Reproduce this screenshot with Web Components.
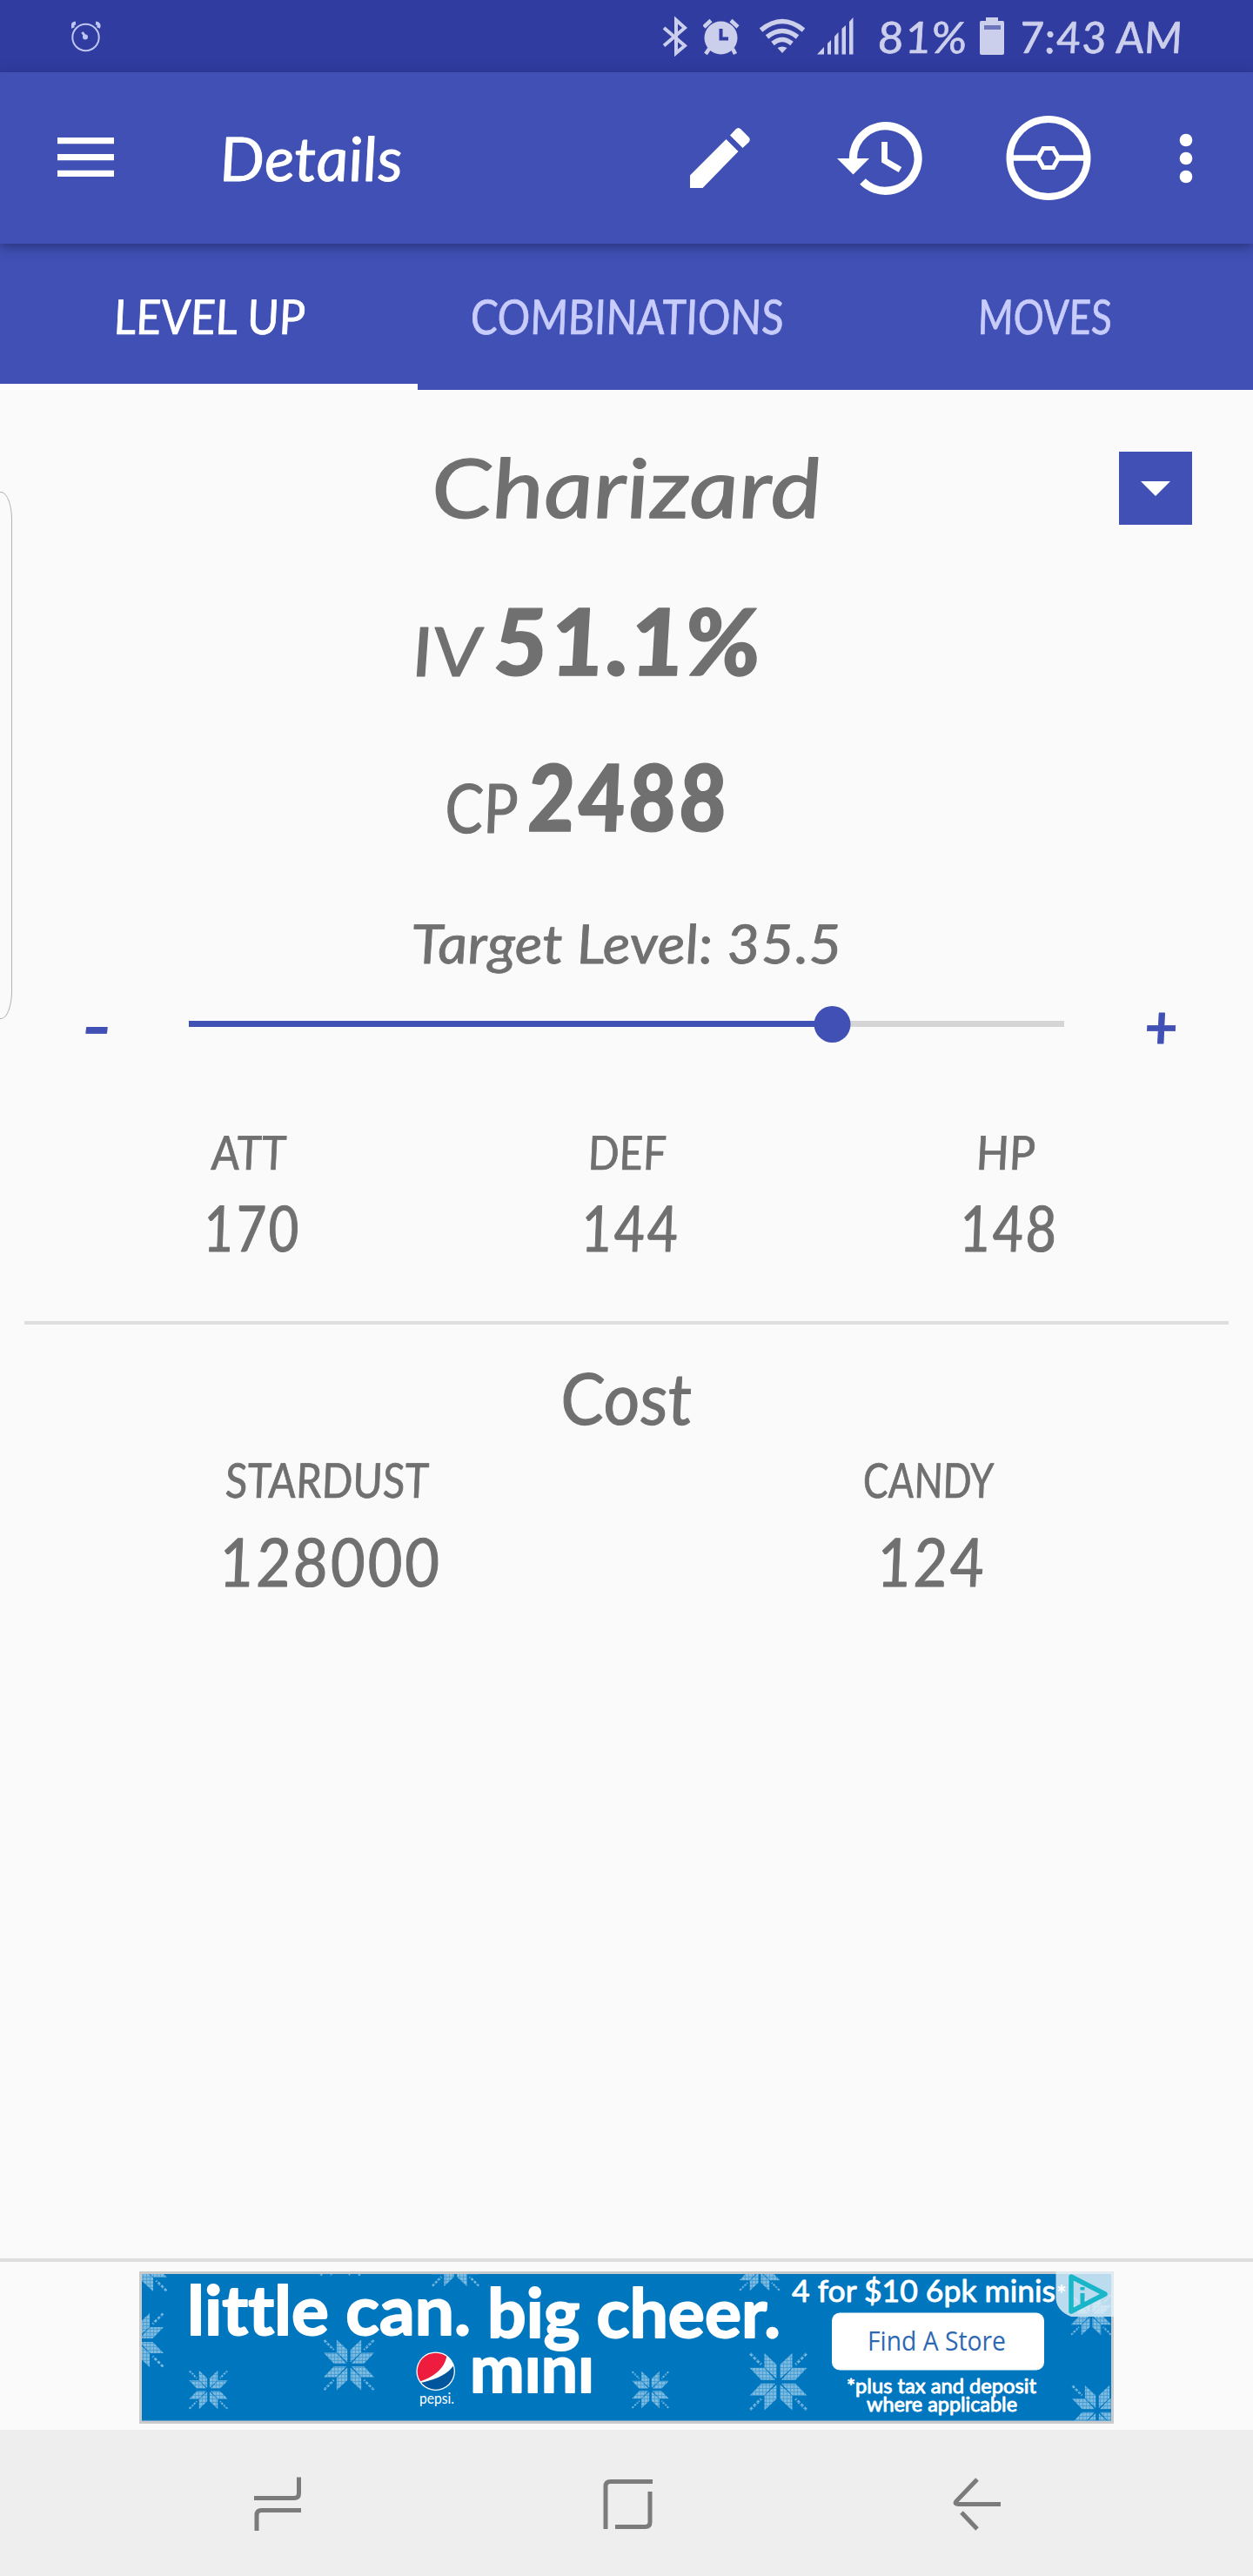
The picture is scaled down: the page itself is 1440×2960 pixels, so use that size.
<!DOCTYPE html>
<html lang="en">
<head>
<meta charset="utf-8">
<title>Details</title>
<style>
html,body{margin:0;padding:0;background:#fafafa}
body{width:1440px;height:2960px;overflow:hidden;font-family:Lato,"Open Sans",sans-serif}
</style>
</head>
<body>
<details-screen></details-screen>
<script>
const define = (name, html, setup) => customElements.define(name, class extends HTMLElement {
  constructor() {
    super();
    const root = this.attachShadow({ mode: 'open' });
    const t = document.createElement('template');
    t.innerHTML = html;
    root.append(t.content.cloneNode(true));
  }
  connectedCallback() { if (setup) setup.call(this, this.shadowRoot); }
});

/* One line of slanted lettering set to a given width (w), box height (h) and baseline (y). */
customElements.define('ink-text', class extends HTMLElement {
  connectedCallback() {
    const a = n => this.getAttribute(n);
    const root = this.shadowRoot || this.attachShadow({ mode: 'open' });
    root.innerHTML = `<style>
      :host{display:block;flex:none;width:${a('w')}px;height:${a('h')}px}
      svg{display:block;overflow:visible}
      text{font-family:Lato,"Open Sans",sans-serif;font-style:italic;font-weight:${a('weight') || 400};font-size:${a('size')}px;fill:currentColor;stroke:currentColor;stroke-width:${a('size') / 75}px;stroke-linejoin:round;font-variant-ligatures:none}
    </style><svg width="${a('w')}" height="${a('h')}"><text transform="translate(2 ${a('y')}) skewX(4)" x="0" y="0" textLength="${a('w')}" lengthAdjust="spacingAndGlyphs"></text></svg>`;
    root.querySelector('text').textContent = a('text');
  }
});

define('status-bar', `<style>
:host{display:flex;align-items:flex-start;height:83px;background:#303c9f;color:#cccfec}
svg{display:block;flex:none}
.note{margin-left:82px}.sp{flex:1}
.bt{margin-right:18px}.al{margin-right:23px}.wf{margin-right:14px}.sg{margin-right:26px}
.bat{margin:0 16px}
.time{margin-right:82px}
</style>
<svg class="note" width="34" height="83" viewBox="82 0 34 83" fill="none" stroke="#bfc6f5" stroke-width="2"><circle cx="98.500" cy="43" r="15.200"/><path d="M84 32Q82 27 87 26.500M113 32Q115 27 110 26.500" stroke-width="4"/><path d="M94.500 37L98 42" stroke-width="3"/><circle cx="98" cy="42.500" r="2" fill="#bfc6f5"/></svg>
<span class="sp"></span>
<svg class="bt" width="28" height="83" viewBox="762 0 28 83" fill="none" stroke="currentColor" stroke-width="4"><path d="M763 32L787 52.500 777 61V23L787 32 763 52.500"/></svg>
<svg class="al" width="42" height="83" viewBox="808 0 42 83"><circle cx="828.500" cy="43.500" r="19" fill="currentColor"/><path d="M809 31L817 23.500M848 31L840 23.500M815 56L811 62M842 56L845 62" stroke="currentColor" stroke-width="4.500"/><path d="M828.500 33V44.500H837" fill="none" stroke="#303c9f" stroke-width="4"/></svg>
<svg class="wf" width="52" height="83" viewBox="873 0 52 83" fill="none" stroke="currentColor" stroke-width="5.500"><path d="M874.500 34.500Q899 14.500 923.500 34.500M881.500 42.500Q899 28.500 916.500 42.500M888 50Q899 41 910 50"/><path d="M893.500 55Q899 52 904.500 55L899 61Z" fill="currentColor" stroke="none"/></svg>
<svg class="sg" width="42" height="83" viewBox="940 0 42 83" fill="currentColor"><path d="M940 62.500L948 54V62.500ZM952 50L956 46V62.500H952ZM960 42L964.500 37V62.500H960ZM968.500 33L973 29V62.500H968.500ZM977 25L981.500 20V62.500H977Z"/></svg>
<ink-text w="103" h="83" y="61" size="50" text="81%"></ink-text>
<svg class="bat" width="28" height="83" viewBox="1126 0 28 83"><path d="M1127.500 24H1133V20H1147V24H1152.500Q1154 24 1154 26V61Q1154 63 1152 63H1128Q1126 63 1126 61V26Q1126 24 1127.500 24Z" fill="currentColor"/><rect x="1131" y="29" width="19" height="5" fill="#6d76bd"/></svg>
<ink-text class="time" w="188" h="83" y="61" size="50" text="7:43 AM"></ink-text>`);

define('app-bar', `<style>
:host{display:flex;height:197px;background:#4150b5;color:#fff;position:relative;z-index:1;box-shadow:0 4px 12px rgba(20,25,70,.5)}
svg{display:block;flex:none}
.menu{margin-left:66px;margin-right:121px}.sp{flex:1}
.pen{margin-right:100px}.his{margin-right:96px}.ball{margin-right:101px}.dots{margin-right:69px}
</style>
<svg class="menu" width="65" height="197" viewBox="66 83 65 197" fill="#fff"><path d="M66 158h65v7.300H66zM66 177h65v7.300H66zM66 195.700h65v7.300H66z"/></svg>
<ink-text w="210" h="197" y="125" size="70" text="Details"></ink-text>
<span class="sp"></span>
<svg class="pen" width="69" height="197" viewBox="793.500 83 69 197" fill="#fff"><path d="M793.500 201.500V216H808L849 174 835 160ZM839.500 155.500L846 148.500Q849 145.500 852 148.500L861 157.500Q863.500 160.500 861 163.500L854 170Z"/></svg>
<svg class="his" width="98" height="197" viewBox="962 83 98 197" fill="none" stroke="#fff"><path d="M980.500 184A37.300 37.300 0 1 1 991.500 208.500" stroke-width="9.300"/><path d="M962 182H999L980.500 200.500Z" fill="#fff" stroke="none"/><path d="M1016.500 163V184.500L1034.500 195" stroke-width="6.800"/></svg>
<svg class="ball" width="98" height="197" viewBox="1157 83 98 197" fill="none" stroke="#fff"><circle cx="1206" cy="181.500" r="44.500" stroke-width="8"/><path d="M1164 181.500H1192.500M1218 181.500H1248" stroke-width="6.500"/><path d="M1200 170.500H1211.500L1217.500 181.500 1211.500 192.500H1200L1194 181.500Z" stroke-width="5"/></svg>
<svg class="dots" width="16" height="197" viewBox="1355 83 16 197" fill="#fff"><circle cx="1363" cy="161" r="7.300"/><circle cx="1363" cy="182" r="7.300"/><circle cx="1363" cy="203" r="7.300"/></svg>`);

define('tab-item', `<style>
:host{display:flex;justify-content:center;box-sizing:border-box;width:480px;height:168px;color:#c8ccfa}
:host([active]){color:#fff;border-bottom:7px solid #fff}
</style><slot></slot>`);

define('tab-strip', `<style>:host{display:flex;background:#4150b5;height:168px}</style><slot></slot>`);

define('drop-button', `<style>
:host{display:flex;align-items:center;justify-content:center;width:84px;height:84px;background:#4150b5}
svg{display:block}
</style><svg width="34" height="17"><path d="M0 0H34L17 17Z" fill="#fff"/></svg>`);

define('level-slider', `<style>
:host{display:flex;height:110px;color:#4150b5}
svg{display:block;flex:none;margin:0 92px 0 90px}
.minus{margin-left:94px}
</style>
<ink-text class="minus" w="33" h="110" y="63" size="63" weight="900" text="-"></ink-text>
<svg width="1006" height="110" viewBox="217 1140 1006 110"><path d="M217 1173h1006v7H217z" fill="#d5d5d5"/><path d="M217 1173h740v7H217z" fill="#4150b5"/><circle cx="956.500" cy="1177" r="21" fill="#4150b5"/></svg>
<ink-text w="38" h="110" y="65" size="70" weight="700" text="+"></ink-text>`);

define('stat-cell', `<style>
:host{display:flex;flex-direction:column;align-items:center;flex:1}
.v{padding-left:6px}
</style><slot></slot><div class="v"><slot name="value"></slot></div>`);

define('edge-handle', `<style>
:host{display:block;position:absolute;left:-20px;top:565px;width:32px;height:604px;border:1.500px solid #b3b3b3;border-radius:0 13px 13px 0/0 32px 32px 0}
</style>`);

define('ad-banner', `<style>
:host{display:block;height:175px;width:1120px}
svg{display:block;overflow:visible}
text{fill:#fff;font-family:Lato,"Open Sans",sans-serif;font-weight:700;font-variant-ligatures:none}
.r{stroke:#fff;stroke-linejoin:round;stroke-width:2}
.l{font-weight:400;stroke:#fff;stroke-linejoin:round;stroke-width:.9}
</style>
<svg width="1120" height="175" viewBox="160 2610 1120 175">
<defs>
<g id="petals"><path d="M-.47-.97L-.06-.58V-.1L-.47-.48Z"/><path d="M.47-.97L.06-.58V-.1L.47-.48Z"/></g>
<g id="flake"><use href="#petals"/><use href="#petals" transform="rotate(90)"/><use href="#petals" transform="rotate(180)"/><use href="#petals" transform="rotate(270)"/>
<path d="M-.95-.95L-.58-.58M.95-.95L.58-.58M-.95.95L-.58.58M.95.95L.58.58" stroke="#7ab9e0" stroke-width=".09" stroke-dasharray=".11 .05"/></g>
<pattern id="knit" width="4" height="4" patternUnits="userSpaceOnUse"><path d="M0 0H4M0 0V4" stroke="#0076bf" stroke-opacity=".5" stroke-width="1.300"/></pattern>
<clipPath id="inner"><rect x="163" y="2613" width="1114" height="168.500"/></clipPath>
<clipPath id="low"><rect x="540" y="2707.500" width="150" height="50"/></clipPath>
<clipPath id="disc"><circle cx="500.700" cy="2724.700" r="21"/></clipPath>
</defs>
<rect x="160" y="2610" width="1120" height="175" fill="#c8cacc"/>
<rect x="163" y="2613" width="1114" height="168.500" fill="#0076bf"/>
<g clip-path="url(#inner)"><g fill="#7ab9e0">
<use href="#flake" transform="translate(161 2602) scale(32)"/>
<use href="#flake" transform="translate(157 2689) scale(32)"/>
<use href="#flake" transform="translate(239.500 2746) scale(23)"/>
<use href="#flake" transform="translate(401 2717.500) scale(30)"/>
<use href="#flake" transform="translate(523.500 2600) scale(28)"/>
<use href="#flake" transform="translate(391 2592) scale(24)"/>
<use href="#flake" transform="translate(873 2609) scale(24)"/>
<use href="#flake" transform="translate(747.500 2746) scale(22)"/>
<use href="#flake" transform="translate(894.500 2736.700) scale(34)"/>
<use href="#flake" transform="translate(1254 2660) scale(24)"/>
<use href="#flake" transform="translate(1261 2770) scale(30)"/>
</g><rect x="160" y="2610" width="1120" height="175" fill="url(#knit)"/></g>
<text class="r" x="215" y="2682.500" font-size="78" textLength="326" lengthAdjust="spacingAndGlyphs">little can.</text>
<text class="r" x="560" y="2686" font-size="78" textLength="337" lengthAdjust="spacingAndGlyphs">big cheer.</text>
<circle cx="500.700" cy="2724.700" r="22.300" fill="#fff"/>
<g clip-path="url(#disc)"><path d="M478 2702H514Q513 2728 478 2738Z" fill="#ee1c3e"/><path d="M524 2712Q518 2732 478 2739V2750H526Z" fill="#00559c"/></g>
<text x="482" y="2761.500" font-size="18" style="font-weight:400" textLength="40" lengthAdjust="spacingAndGlyphs">pepsi.</text>
<g clip-path="url(#low)"><text class="r" x="540" y="2749" font-size="77" textLength="143" lengthAdjust="spacingAndGlyphs">mini</text></g>
<text class="l" x="910" y="2644.500" font-size="34" textLength="303" lengthAdjust="spacingAndGlyphs">4 for $10 6pk minis</text>
<rect x="956" y="2657.500" width="244" height="66" rx="9" fill="#fff"/>
<text x="997" y="2701" style="font-family:'Open Sans';font-weight:500;fill:#2d68b2" font-size="31" textLength="159" lengthAdjust="spacingAndGlyphs">Find A Store</text>
<text class="l" font-size="24"><tspan x="973" y="2750" textLength="218" lengthAdjust="spacingAndGlyphs">*plus tax and deposit</tspan> <tspan x="996" y="2771" textLength="173" lengthAdjust="spacingAndGlyphs">where applicable</tspan></text>
<path d="M1213.500 2610H1280V2662H1231Q1213.500 2655 1213.500 2640Z" fill="#e4f1f9" fill-opacity=".82"/>
<text x="1214" y="2646" font-size="28">*</text>
<path d="M1231 2616V2656L1270 2636Z" fill="none" stroke="#19b5c9" stroke-width="5.500" stroke-linejoin="round"/>
<path d="M1244 2628v3.500M1244 2635v12" stroke="#19b5c9" stroke-width="5"/>
</svg>`);

define('nav-bar', `<style>
:host{display:flex;height:168px;background:#eee;justify-content:space-between;align-items:center;padding:3px 287px 0 290px;box-sizing:border-box}
svg{display:block}
</style>
<svg width="58" height="66" viewBox="290 2845 58 66" fill="none" stroke="#7b7b7b" stroke-width="5"><path d="M343.500 2846.500V2865Q343.500 2870.500 338 2870.500H292M295 2908V2890Q295 2884.500 300.500 2884.500H346"/></svg>
<svg width="60" height="66" viewBox="691 2845 60 66" fill="none" stroke="#7b7b7b" stroke-width="5"><path d="M695 2906V2857Q695 2851.500 700.500 2851.500H749M746 2863V2898Q746 2903.500 740.500 2903.500H706"/></svg>
<svg width="58" height="66" viewBox="1096 2845 58 66" fill="none" stroke="#7b7b7b" stroke-width="5"><path d="M1124 2849L1100 2874Q1097.500 2877.500 1102 2877.500H1151M1106 2887L1124 2906"/></svg>`);

define('details-screen', `<style>
:host{display:flex;flex-direction:column;position:relative;width:1440px;height:2960px;background:#fafafa;overflow:hidden;color:#707070}
main{display:flex;flex-direction:column;flex:1}
.row{display:flex;flex:none}
.name{display:grid;grid-template-columns:1fr 448px 1fr;height:192px}
.name ink-text{grid-column:2}
.name drop-button{justify-self:end;margin:71px 70px 0 0}
.iv{padding-left:473px;gap:12px;height:190px}
.cp{padding-left:511px;gap:10px;height:200px}
.center{justify-content:center}
.stats{padding:0 68px 0 67px;height:268px}
hr{box-sizing:border-box;width:1384px;height:4px;margin:0 auto;border:0;background:#dedede;flex:none}
.cost{padding:0 29px}
.ad{margin-top:auto;border-top:4px solid #dedede;padding-top:11px;height:182px;justify-content:center}
</style>
<status-bar></status-bar>
<app-bar></app-bar>
<tab-strip>
<tab-item active><ink-text w="220" h="161" y="104" size="55" text="LEVEL UP"></ink-text></tab-item>
<tab-item><ink-text w="360" h="168" y="104" size="55" text="COMBINATIONS"></ink-text></tab-item>
<tab-item><ink-text w="154" h="168" y="104" size="55" text="MOVES"></ink-text></tab-item>
</tab-strip>
<main>
<div class="name"><ink-text w="448" h="192" y="147" size="94" text="Charizard"></ink-text><drop-button></drop-button></div>
<div class="row iv"><ink-text w="81" h="190" y="137" size="78" text="IV"></ink-text><ink-text w="308" h="190" y="136" size="106" weight="900" text="51.1%"></ink-text></div>
<div class="row cp"><ink-text w="84" h="200" y="127" size="78" text="CP"></ink-text><ink-text w="232" h="200" y="125" size="106" weight="900" text="2488"></ink-text></div>
<div class="row center"><ink-text w="494" h="110" y="77" size="62" text="Target Level: 35.5"></ink-text></div>
<level-slider></level-slider>
<div class="row stats">
<stat-cell><ink-text w="86" h="130" y="94" size="54" text="ATT"></ink-text><ink-text slot="value" w="112" h="100" y="58" size="73" text="170"></ink-text></stat-cell>
<stat-cell><ink-text w="90" h="130" y="94" size="54" text="DEF"></ink-text><ink-text slot="value" w="114" h="100" y="58" size="73" text="144"></ink-text></stat-cell>
<stat-cell><ink-text w="68" h="130" y="94" size="54" text="HP"></ink-text><ink-text slot="value" w="114" h="100" y="58" size="73" text="148"></ink-text></stat-cell>
</div>
<hr>
<div class="row center"><ink-text w="152" h="138" y="115" size="82" text="Cost"></ink-text></div>
<div class="row cost">
<stat-cell><ink-text w="234" h="90" y="61" size="55" text="STARDUST"></ink-text><ink-text slot="value" w="256" h="100" y="73" size="77" text="128000"></ink-text></stat-cell>
<stat-cell><ink-text w="150" h="90" y="61" size="55" text="CANDY"></ink-text><ink-text slot="value" w="126" h="100" y="73" size="77" text="124"></ink-text></stat-cell>
</div>
<div class="row ad"><ad-banner></ad-banner></div>
</main>
<nav-bar></nav-bar>
<edge-handle></edge-handle>`);
</script>
</body>
</html>
